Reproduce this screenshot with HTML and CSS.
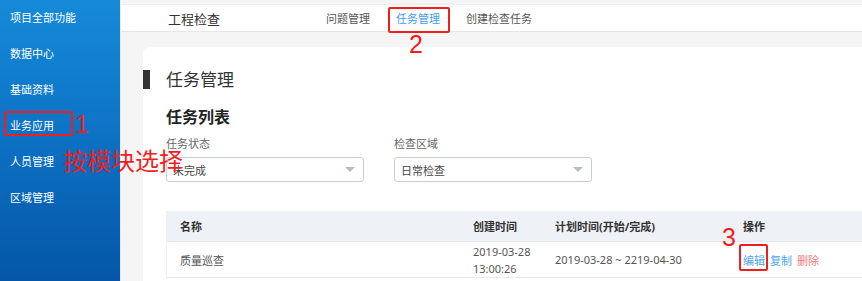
FILE: index.html
```html
<!DOCTYPE html>
<html lang="zh">
<head>
<meta charset="utf-8">
<title>任务管理</title>
<link rel="stylesheet" href="styles.css">
</head>
<body>
<div class="app">
  <aside class="sidebar">
    <div class="side-item">项目全部功能</div>
    <div class="side-item">数据中心</div>
    <div class="side-item">基础资料</div>
    <div class="side-item">业务应用</div>
    <div class="side-item">人员管理</div>
    <div class="side-item">区域管理</div>
  </aside>
  <main class="main">
    <header class="topbar">
      <div class="topbar-title">工程检查</div>
      <nav class="topnav">
        <span class="nav-item">问题管理</span>
        <span class="nav-item active">任务管理</span>
        <span class="nav-item">创建检查任务</span>
      </nav>
    </header>
    <section class="content">
      <div class="card">
        <div class="card-title"><span class="title-bar"></span>任务管理</div>
        <div class="list-title">任务列表</div>
        <div class="filters">
          <div class="field">
            <div class="field-label">任务状态</div>
            <div class="select"><span>未完成</span><i class="caret"></i></div>
          </div>
          <div class="field">
            <div class="field-label">检查区域</div>
            <div class="select"><span>日常检查</span><i class="caret"></i></div>
          </div>
        </div>
        <div class="table">
          <div class="tr th">
            <div class="td">名称</div>
            <div class="td">创建时间</div>
            <div class="td">计划时间(开始/完成)</div>
            <div class="td">操作</div>
          </div>
          <div class="tr">
            <div class="td">质量巡查</div>
            <div class="td stack"><span>2019-03-28</span><span>13:00:26</span></div>
            <div class="td">2019-03-28 ~ 2219-04-30</div>
            <div class="td ops"><span class="op edit">编辑</span><span class="op">复制</span><span class="op del">删除</span></div>
          </div>
        </div>
      </div>
    </section>
  </main>
  <div class="mark box1"></div>
  <div class="mark num n1">1</div>
  <div class="mark box2"></div>
  <div class="mark num n2">2</div>
  <div class="mark box3"></div>
  <div class="mark num n3">3</div>
  <div class="mark note">按模块选择</div>
</div>
</body>
</html>
```

FILE: styles.css
```css
html, body {
  margin: 0;
  padding: 0;
  width: 862px;
  height: 281px;
  overflow: hidden;
  font-family: "Noto Sans", "Noto Sans CJK SC", sans-serif;
  color: #333;
}
.app {
  position: relative;
  display: flex;
  width: 862px;
  height: 281px;
  overflow: hidden;
}
.sidebar {
  width: 120px;
  flex: none;
  background: linear-gradient(180deg, #168ad8 0%, #0e76c8 40%, #0556a8 100%);
}
.side-item {
  height: 36px;
  line-height: 35px;
  padding-left: 10px;
  font-size: 11px;
  color: #fff;
}
.main {
  flex: 1;
  min-width: 0;
  background: #f5f5f6;
  border-left: 1px solid #e4ecf4;
  padding-top: 4px;
  overflow: hidden;
}
.topbar {
  height: 28px;
  background: #fff;
  border-top: 1px solid #eeeeee;
  border-bottom: 1px solid #e6e6e6;
  display: flex;
  align-items: center;
  box-sizing: border-box;
}
.topbar-title {
  box-sizing: border-box;
  padding-left: 47px;
  width: 205px;
  font-size: 13px;
  color: #333;
}
.topnav {
  display: flex;
  gap: 26px;
  font-size: 11px;
  color: #555;
}
.nav-item.active { color: #3f9cf0; }
.content {
  padding: 15px 0 0 22px;
}
.card {
  width: 820px;
  height: 260px;
  background: #fff;
  border-radius: 7px 0 0 0;
  box-sizing: border-box;
  padding: 23px 0 0 23px;
}
.card-title {
  position: relative;
  height: 19px;
  line-height: 19px;
  font-size: 17px;
  color: #333;
  display: flex;
  align-items: center;
}
.title-bar {
  width: 7px;
  height: 19px;
  background: #333;
  margin-left: -23px;
  margin-right: 16px;
}
.list-title {
  margin-top: 17px;
  font-size: 16px;
  font-weight: bold;
  line-height: 22px;
  color: #222;
}
.filters {
  display: flex;
  gap: 30px;
  margin-top: 8px;
}
.field { width: 198px; }
.field-label {
  font-size: 11px;
  line-height: 16px;
  color: #666;
}
.select {
  margin-top: 5px;
  height: 25px;
  box-sizing: border-box;
  border: 1px solid #c6cedb;
  border-radius: 3px;
  display: flex;
  align-items: center;
  justify-content: space-between;
  padding: 0 8px 0 6px;
  font-size: 11px;
  color: #444;
}
.caret {
  width: 0;
  height: 0;
  border-left: 5px solid transparent;
  border-right: 5px solid transparent;
  border-top: 5px solid #b8bcc4;
}
.table {
  margin-top: 29px;
  width: 720px;
}
.tr {
  display: grid;
  grid-template-columns: 293px 82px 188px 1fr;
  border-bottom: 1px solid #e6e9ef;
  border-left: 1px solid #eef0f4;
  height: 35px;
  align-items: center;
}
.tr.th {
  height: 30px;
  background: #eef1f6;
  font-weight: bold;
  color: #333;
}
.td {
  padding-left: 13px;
  font-size: 11px;
  color: #555;
  white-space: nowrap;
}
.th .td { color: #333; }
.stack {
  display: flex;
  flex-direction: column;
  line-height: 17px;
}
.ops { display: flex; gap: 5px; }
.op { color: #4fa3f0; }
.op.del { color: #f57b7b; }
.mark { position: absolute; }
.box1, .box2, .box3 {
  border: 2px solid #f01e1e;
  border-radius: 2px;
  box-sizing: border-box;
}
.box1 { left: 4px; top: 111px; width: 69px; height: 25px; }
.box2 { left: 388px; top: 7px; width: 62px; height: 26px; }
.box3 { left: 739px; top: 244px; width: 29px; height: 27px; }
.num {
  font-family: "Liberation Sans", sans-serif;
  font-size: 25px;
  line-height: 25px;
  color: #f01e1e;
}
.n1 { left: 75px; top: 112px; }
.n2 { left: 409px; top: 32px; }
.n3 { left: 722px; top: 225px; }
.note {
  left: 63px;
  top: 145px;
  font-family: "Noto Sans CJK SC", sans-serif;
  font-size: 24px;
  line-height: 30px;
  color: #f01e1e;
}
```
